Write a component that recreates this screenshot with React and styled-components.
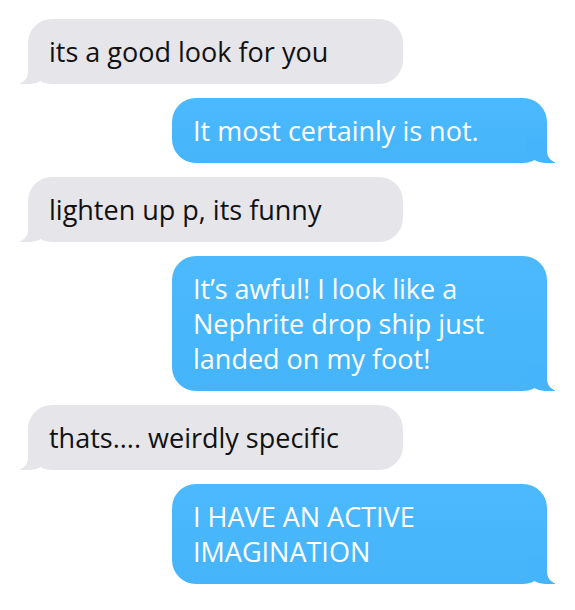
import styled, { createGlobalStyle } from "styled-components";

const GlobalStyle = createGlobalStyle`
  body {
    margin: 0;
    background: #ffffff;
    font-family: "Open Sans", "Noto Sans", sans-serif;
  }
`;

const Thread = styled.div`
  display: flex;
  flex-direction: column;
  gap: 14px;
  padding: 19px 28px 0 28px;
`;

const Bubble = styled.div`
  position: relative;
  box-sizing: border-box;
  width: 375px;
  padding: 15px 20px 15px 21px;
  border-radius: 24px;
  font-size: 27px;
  line-height: 35px;
  align-self: ${(p) => (p.$mine ? "flex-end" : "flex-start")};
  background: ${(p) =>
    p.$mine ? "linear-gradient(#4cb9fd, #45b4fa)" : "#e5e5ea"};
  color: ${(p) => (p.$mine ? "#ffffff" : "#111111")};

  &::before {
    content: "";
    position: absolute;
    bottom: 0;
    ${(p) => (p.$mine ? "right: -8px;" : "left: -8px;")}
    width: 28px;
    height: 26px;
    background: ${(p) => (p.$mine ? "#45b4fa" : "#e5e5ea")};
    ${(p) =>
      p.$mine
        ? "border-bottom-left-radius: 18px 15px;"
        : "border-bottom-right-radius: 18px 15px;"}
  }

  &::after {
    content: "";
    position: absolute;
    bottom: 0;
    ${(p) => (p.$mine ? "right: -30px;" : "left: -30px;")}
    width: 30px;
    height: 26px;
    background: #ffffff;
    ${(p) =>
      p.$mine
        ? "border-bottom-left-radius: 12px;"
        : "border-bottom-right-radius: 12px;"}
  }
`;

const messages = [
  { mine: false, text: "its a good look for you" },
  { mine: true, text: "It most certainly is not." },
  { mine: false, text: "lighten up p, its funny" },
  {
    mine: true,
    text: "It\u2019s awful! I look like a Nephrite drop ship just landed on my foot!",
  },
  { mine: false, text: "thats.... weirdly specific" },
  { mine: true, text: "I HAVE AN ACTIVE IMAGINATION" },
];

export default function App() {
  return (
    <>
      <GlobalStyle />
      <Thread>
        {messages.map((m, i) => (
          <Bubble key={i} $mine={m.mine}>
            {m.text}
          </Bubble>
        ))}
      </Thread>
    </>
  );
}
